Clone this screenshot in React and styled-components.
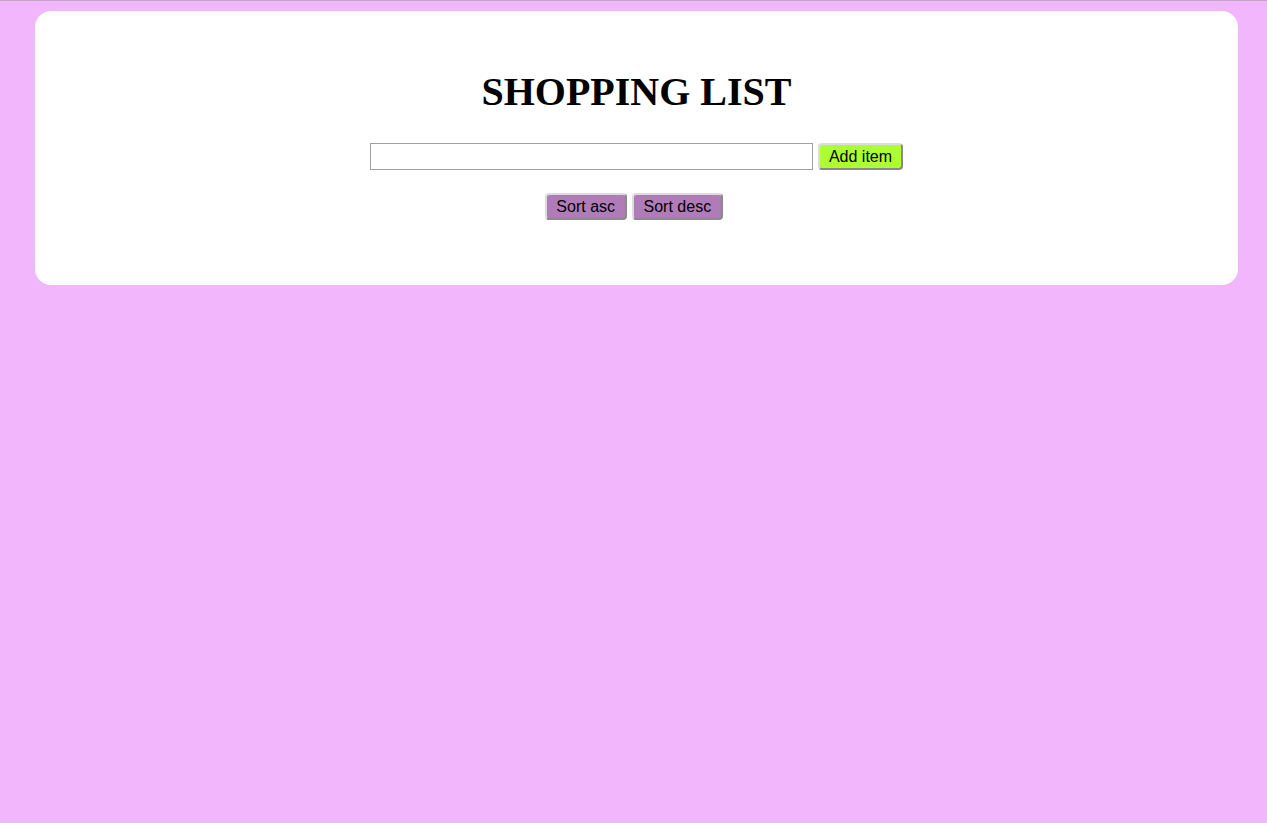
import styled, { createGlobalStyle } from "styled-components";

const Global = createGlobalStyle`
  html, body {
    margin: 0;
    padding: 0;
  }
  body {
    background: #f2b6fc;
    border-top: 1px solid #c4a6c8;
    min-height: 822px;
    font-family: "Liberation Serif", "Times New Roman", serif;
  }
`;

const Card = styled.div`
  background: #ffffff;
  margin: 10px 29px 0 35px;
  border-radius: 16px;
  height: 274px;
  box-sizing: border-box;
  padding-top: 58px;
  display: flex;
  flex-direction: column;
  align-items: center;
`;

const Title = styled.h1`
  margin: 0;
  font-size: 40px;
  line-height: 46px;
  font-weight: bold;
  color: #000;
`;

const Row = styled.div`
  display: flex;
  align-items: center;
  gap: 5px;
  margin-top: ${(p) => p.top}px;
  padding-right: ${(p) => p.trail || 0}px;
`;

const Input = styled.input`
  width: 443px;
  height: 27px;
  box-sizing: border-box;
  border: 1px solid #a0a0a0;
  padding: 1px 2px;
  font-family: "Liberation Sans", Arial, sans-serif;
  font-size: 13px;
`;

const Button = styled.button`
  background: ${(p) => p.bg};
  height: 27px;
  box-sizing: border-box;
  border: 2px solid;
  border-color: #dcdcdc #8a8a8a #8a8a8a #dcdcdc;
  border-radius: 4px;
  padding: 0 ${(p) => p.pad || 9}px;
  font-family: "Liberation Sans", Arial, sans-serif;
  font-size: 16px;
  color: #000;
`;

export default function App() {
  return (
    <>
      <Global />
      <Card>
        <Title>SHOPPING LIST</Title>
        <Row top={28}>
          <Input type="text" />
          <Button bg="#adff2f">Add item</Button>
        </Row>
        <Row top={23} trail={5}>
          <Button bg="#b07cb7" pad={9.5}>Sort asc</Button>
          <Button bg="#b07cb7" pad={10}>Sort desc</Button>
        </Row>
      </Card>
    </>
  );
}
